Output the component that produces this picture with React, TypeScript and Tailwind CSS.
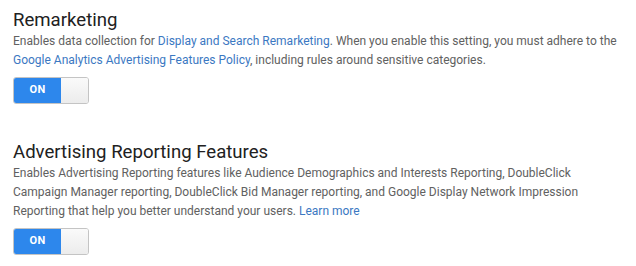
const font = { fontFamily: "Roboto, 'Noto Sans', sans-serif" };

function Toggle() {
  return (
    <div className="flex h-[27px] w-[76px] overflow-hidden rounded-[3px] border border-[#c4c4c4]">
      <div className="flex w-[47px] items-center justify-center bg-[#2d87ec] text-[11px] font-bold tracking-wide text-white">
        ON
      </div>
      <div className="flex-1 bg-gradient-to-b from-[#fafafa] to-[#ececec]" />
    </div>
  );
}

function Link({ children }: { children: React.ReactNode }) {
  return <span className="text-[#3b78c2]">{children}</span>;
}

export default function App() {
  return (
    <div className="min-h-screen bg-white pl-[13px] pt-[8px]" style={font}>
      <section>
        <h2 className="text-[18.6px] leading-[24px] text-[#212121]">Remarketing</h2>
        <p className="whitespace-nowrap text-[12px] leading-[19px] text-[#616161]">
          Enables data collection for <Link>Display and Search Remarketing</Link>. When you enable this setting, you must adhere to the
          <br />
          <Link>Google Analytics Advertising Features Policy</Link>, including rules around sensitive categories.
        </p>
        <div className="mt-[7px]">
          <Toggle />
        </div>
      </section>
      <section className="mt-[36px]">
        <h2 className="text-[18.6px] leading-[24px] text-[#212121]">Advertising Reporting Features</h2>
        <p className="whitespace-nowrap text-[12px] leading-[19px] text-[#616161]">
          Enables Advertising Reporting features like Audience Demographics and Interests Reporting, DoubleClick
          <br />
          Campaign Manager reporting, DoubleClick Bid Manager reporting, and Google Display Network Impression
          <br />
          Reporting that help you better understand your users. <Link>Learn more</Link>
        </p>
        <div className="mt-[7px]">
          <Toggle />
        </div>
      </section>
    </div>
  );
}
